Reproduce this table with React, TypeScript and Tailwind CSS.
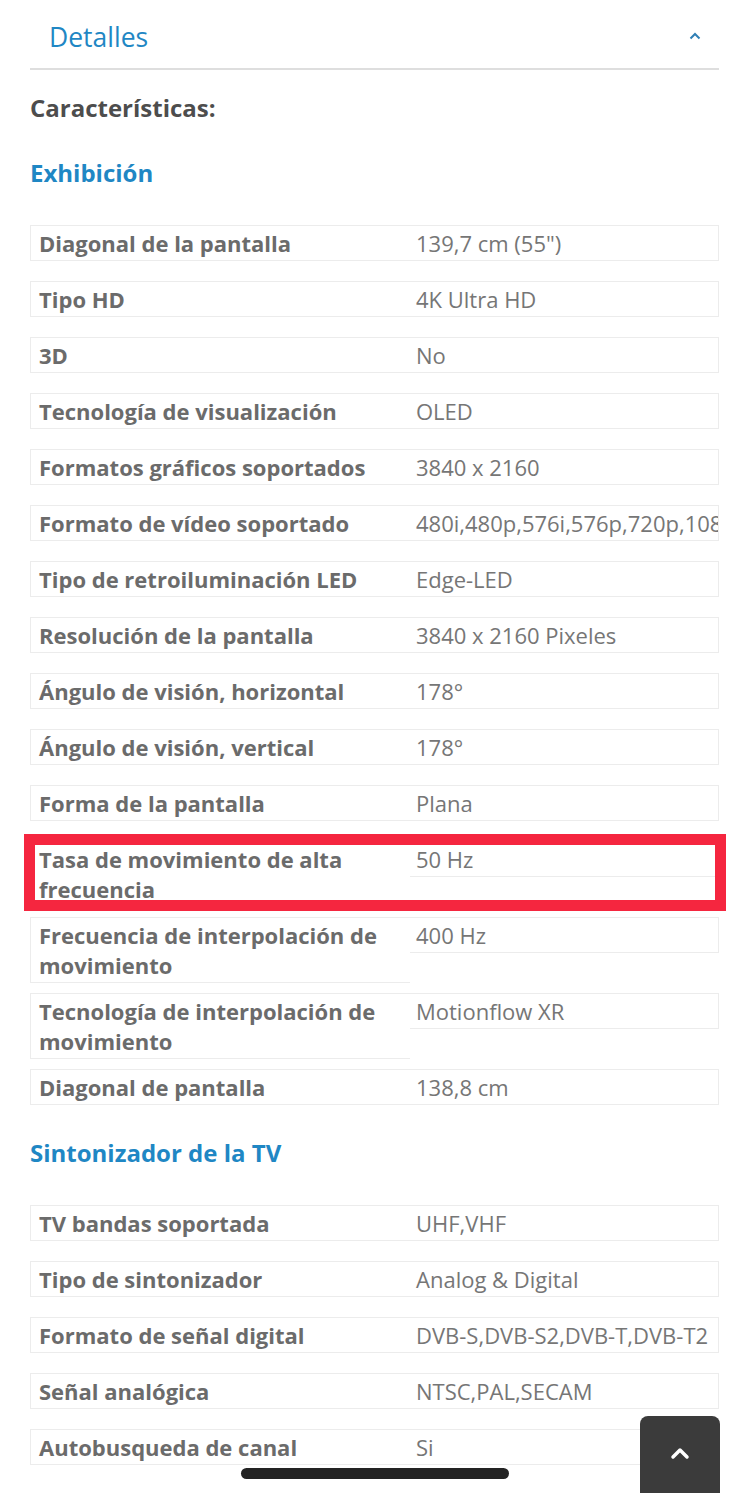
import React from 'react';

type Spec = { label: string; value: string; marked?: boolean };

const exhibicion: Spec[] = [
  { label: 'Diagonal de la pantalla', value: '139,7 cm (55")' },
  { label: 'Tipo HD', value: '4K Ultra HD' },
  { label: '3D', value: 'No' },
  { label: 'Tecnología de visualización', value: 'OLED' },
  { label: 'Formatos gráficos soportados', value: '3840 x 2160' },
  { label: 'Formato de vídeo soportado', value: '480i,480p,576i,576p,720p,1080i,1080p,2160p' },
  { label: 'Tipo de retroiluminación LED', value: 'Edge-LED' },
  { label: 'Resolución de la pantalla', value: '3840 x 2160 Pixeles' },
  { label: 'Ángulo de visión, horizontal', value: '178°' },
  { label: 'Ángulo de visión, vertical', value: '178°' },
  { label: 'Forma de la pantalla', value: 'Plana' },
  { label: 'Tasa de movimiento de alta frecuencia', value: '50 Hz', marked: true },
  { label: 'Frecuencia de interpolación de movimiento', value: '400 Hz' },
  { label: 'Tecnología de interpolación de movimiento', value: 'Motionflow XR' },
  { label: 'Diagonal de pantalla', value: '138,8 cm' },
];

const sintonizador: Spec[] = [
  { label: 'TV bandas soportada', value: 'UHF,VHF' },
  { label: 'Tipo de sintonizador', value: 'Analog & Digital' },
  { label: 'Formato de señal digital', value: 'DVB-S,DVB-S2,DVB-T,DVB-T2' },
  { label: 'Señal analógica', value: 'NTSC,PAL,SECAM' },
  { label: 'Autobusqueda de canal', value: 'Si' },
];

const SpecRow: React.FC<{ spec: Spec }> = ({ spec }) => (
  <div className="relative flex items-start">
    <div className="w-[380px] shrink-0 mb-[10px] border border-r-0 border-[#ececec] pl-2 pr-2 py-[2px] text-[22px] leading-[30px] font-bold text-[#6b6b6b]">
      {spec.label}
    </div>
    <div className="flex-1 min-w-0 h-[36px] mb-[20px] border border-l-0 border-[#ececec] pl-[6px] py-[2px] text-[22px] leading-[30px] text-[#767676] whitespace-nowrap overflow-hidden">
      {spec.value}
    </div>
    {spec.marked && (
      <div className="absolute top-[-7px] left-[-6px] right-[-7px] bottom-[6px] border-[11px] border-[#f5263f] pointer-events-none"></div>
    )}
  </div>
);

const Section: React.FC<{ title: string; specs: Spec[] }> = ({ title, specs }) => (
  <div>
    <h3 className="text-[24px] leading-[36px] font-bold text-[#1f87c4] mt-[10px] mb-[34px]">{title}</h3>
    <div>
      {specs.map(s => (
        <SpecRow key={s.label} spec={s} />
      ))}
    </div>
  </div>
);

export default function App() {
  return (
    <div className="relative w-[749px] h-[1493px] overflow-hidden bg-white" style={{ fontFamily: '"Open Sans", "Noto Sans", sans-serif' }}>
      <div className="px-[30px]">
        {/* Accordion header */}
        <div className="h-[70px] flex items-center justify-between pl-[19px] pr-[18px] border-b-2 border-[#dedede]">
          <span className="text-[26.5px] text-[#1f87c4] mt-[8px]">Detalles</span>
          <svg width="12" height="8" viewBox="0 0 12 8" className="mt-[3px]">
            <path d="M1.5 6.5 L6 2 L10.5 6.5" fill="none" stroke="#2f7fb5" strokeWidth="2" />
          </svg>
        </div>

        <h2 className="mt-[20px] text-[24px] leading-[36px] font-bold text-[#4d4d4d]">Características:</h2>

        <div className="mt-[29px]">
          <Section title="Exhibición" specs={exhibicion} />
          <Section title="Sintonizador de la TV" specs={sintonizador} />
        </div>
      </div>

      {/* back to top */}
      <button className="absolute left-[640px] top-[1416px] w-[80px] h-[90px] rounded-t-[8px] bg-[#3b3b3b] flex justify-center pt-[30px]">
        <svg width="20" height="14" viewBox="0 0 20 14">
          <path d="M3 11 L10 4 L17 11" fill="none" stroke="#fff" strokeWidth="3.5" strokeLinecap="round" strokeLinejoin="round" />
        </svg>
      </button>

      {/* home indicator */}
      <div className="absolute left-[241px] top-[1468px] w-[268px] h-[11px] rounded-full bg-[#232323]"></div>
    </div>
  );
}
